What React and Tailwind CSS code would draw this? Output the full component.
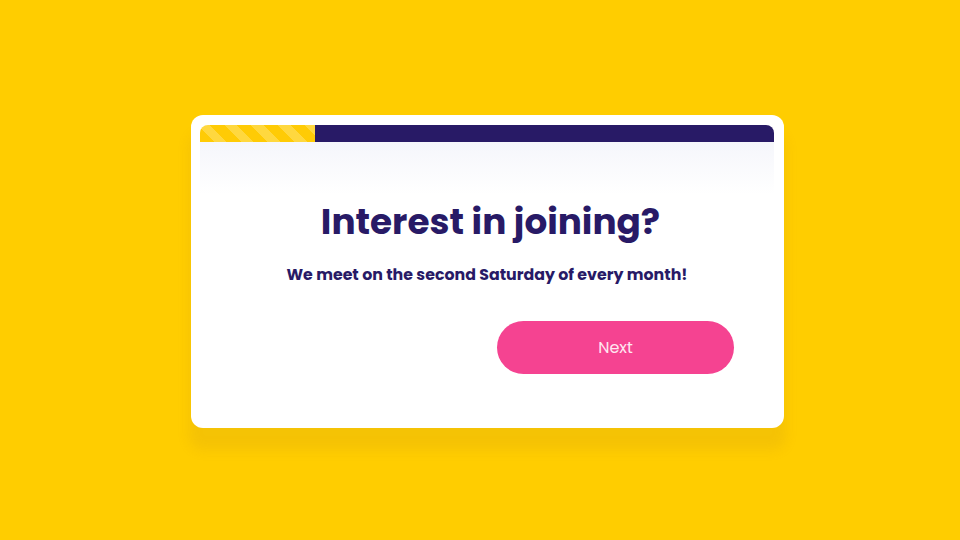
export default function App() {
  const font = { fontFamily: '"Poppins", "DejaVu Sans", "Noto Sans", sans-serif' }
  return (
    <div className="w-[960px] h-[540px] bg-[#ffcd00] flex items-center justify-center pl-[15px] pt-[3px]" style={font}>
      <div className="w-[593px] h-[313px] bg-white rounded-[12px] p-[9px] pr-[10px] pt-[10px] shadow-[0_20px_12px_2px_rgba(190,140,30,0.16)] flex flex-col">
        <div className="flex h-[17px] rounded-t-[8px] overflow-hidden">
          <div className="w-[115px] bg-[repeating-linear-gradient(45deg,#ffcb05_0px,#ffcb05_10px,#ffd83f_10px,#ffd83f_19px)]" />
          <div className="flex-1 bg-[#281a66]" />
        </div>
        <div className="flex-1 flex flex-col bg-[linear-gradient(to_bottom,#f5f6fb,#ffffff_52px)]">
          <h1 className="mt-[58px] pl-[7px] text-center text-[#281a66] text-[35.8px] font-bold leading-[44px]">
            Interest in joining?
          </h1>
          <p className="mt-[20px] text-center text-[#281a66] text-[15.8px] font-bold leading-[22px]">
            We meet on the second Saturday of every month!
          </p>
          <div className="mt-[35px] flex justify-end pr-[40px]">
            <button className="w-[237px] h-[53px] rounded-full bg-[#f54391] text-[#ffe6f0] text-[16px] leading-none">
              Next
            </button>
          </div>
        </div>
      </div>
    </div>
  )
}
